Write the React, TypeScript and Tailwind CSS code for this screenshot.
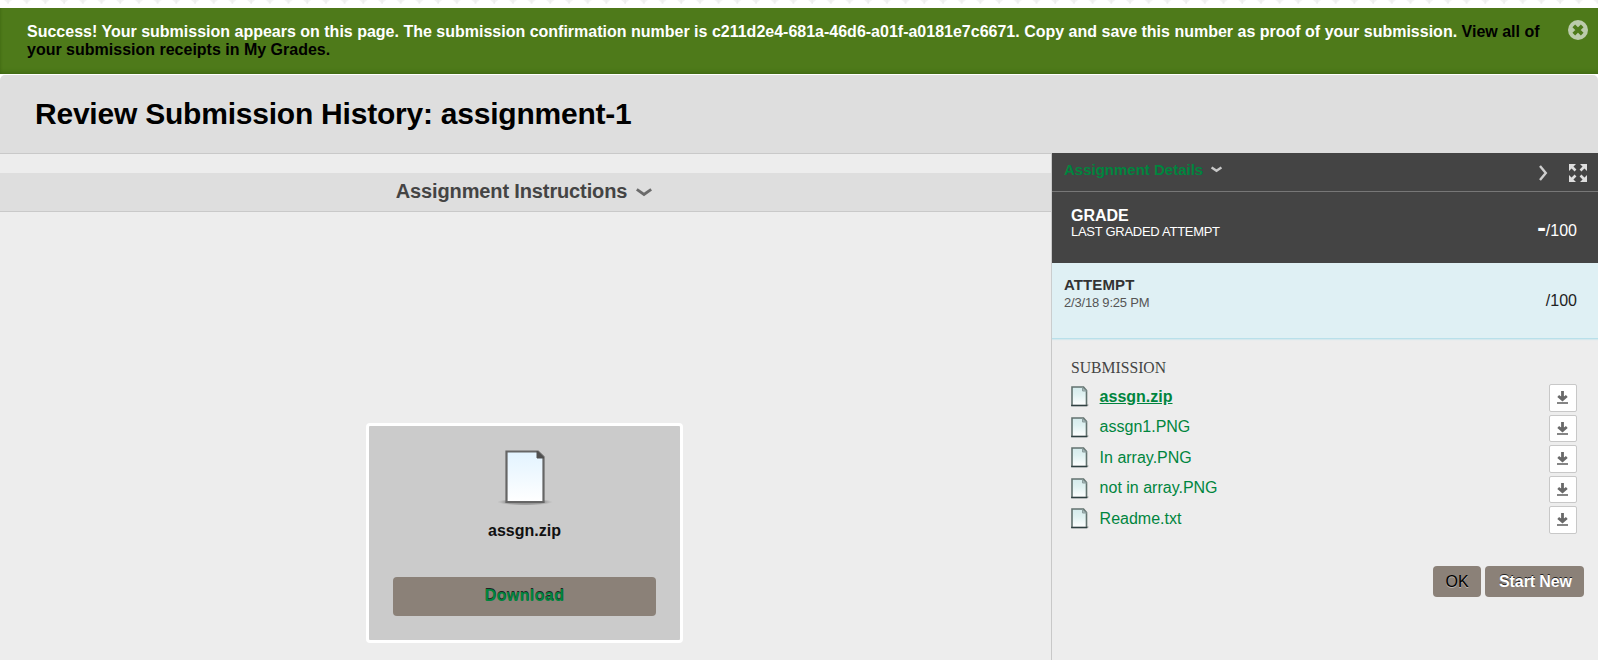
const files = ["assgn.zip", "assgn1.PNG", "In array.PNG", "not in array.PNG", "Readme.txt"];

function SmallDoc() {
  return (
    <svg width="18" height="22" viewBox="0 0 18 22" className="block">
      <defs>
        <linearGradient id="sd" x1="0" y1="0" x2="0" y2="1">
          <stop offset="0" stopColor="#d5ebec" />
          <stop offset="0.4" stopColor="#dff1f1" />
          <stop offset="1" stopColor="#ffffff" />
        </linearGradient>
      </defs>
      <path d="M0 19H17.5" stroke="#c4c4c4" strokeWidth="2" />
      <path d="M1 1H12.5L15.5 4.5V19.5H1Z" fill="url(#sd)" stroke="#62726f" strokeWidth="1.6" />
      <path d="M11.5 1.5V5H15.5Z" fill="#a5b8b8" stroke="#8a9c9c" strokeWidth="1" />
      <path d="M0.2 19.5H16.3" stroke="#2f4142" strokeWidth="1.3" />
    </svg>
  );
}

function LargeDoc() {
  return (
    <svg width="56" height="58" viewBox="0 0 56 58" className="block">
      <defs>
        <linearGradient id="ld" x1="0" y1="0" x2="0" y2="1">
          <stop offset="0" stopColor="#e2f3ff" />
          <stop offset="1" stopColor="#ffffff" />
        </linearGradient>
        <radialGradient id="sh">
          <stop offset="0" stopColor="#666" stopOpacity="0.7" />
          <stop offset="0.7" stopColor="#777" stopOpacity="0.55" />
          <stop offset="1" stopColor="#999" stopOpacity="0" />
        </radialGradient>
      </defs>
      <ellipse cx="28" cy="53" rx="28" ry="3.5" fill="url(#sh)" />
      <path d="M9.5 2.5H41L46.5 8V53H9.5Z" fill="url(#ld)" stroke="#666" strokeWidth="2.2" />
      <path d="M40 2V9H47Z" fill="#505050" stroke="#505050" />
    </svg>
  );
}

function DownloadIcon() {
  return (
    <svg width="12" height="14" viewBox="0 0 12 14">
      <path d="M5.5 0V8M1.2 5L5.5 8.6L9.8 5" fill="none" stroke="#696969" strokeWidth="2.8" />
      <path d="M3 5.5H8L5.5 9Z" fill="#696969" />
      <path d="M0 12H11" stroke="#858585" strokeWidth="2" />
    </svg>
  );
}

export default function App() {
  return (
    <div className="flex h-[660px] w-full flex-col overflow-hidden bg-[#ededed] font-['Liberation_Sans',Arial,sans-serif]">
      <svg className="block h-2 w-full shrink-0 bg-white">
        <defs>
          <pattern id="dots" x="0" y="-1" width="18.7" height="9" patternUnits="userSpaceOnUse">
            <path d="M4 1H12L8 4.5Z" fill="#f3f3f3" />
            <path d="M8 1V5" stroke="#ececec" />
          </pattern>
        </defs>
        <rect width="100%" height="8" fill="url(#dots)" />
      </svg>
      <div className="flex h-[66px] shrink-0 justify-between bg-[#4e7a1a] pt-[15px] pr-[10px] pl-[27px] shadow-[inset_0_-5px_5px_-4px_#3c6312,inset_2px_0_3px_-2px_#3c6312]">
        <p className="text-[16px] leading-[18px] font-bold whitespace-nowrap text-white">
          Success! Your submission appears on this page. The submission confirmation number is c211d2e4-681a-46d6-a01f-a0181e7c6671. Copy and save this number as proof of your submission. <span className="text-black">View all of<br />your submission receipts in My Grades.</span>
        </p>
        <svg width="20" height="20" viewBox="0 0 20 20" className="-mt-[3px]">
          <circle cx="10" cy="10" r="10" fill="#bccbac" />
          <path d="M5.8 5.8L14.2 14.2M14.2 5.8L5.8 14.2" stroke="#4e7a1a" strokeWidth="3.8" />
        </svg>
      </div>
      <div className="shrink-0 bg-white pt-px">
        <header className="h-[79px] rounded-t-[5px] border-b border-[#c9c9c9] bg-[#dedede] pt-[21px] pl-[35px]">
          <h1 className="text-[30px] leading-[36px] font-bold tracking-[-0.22px] whitespace-nowrap text-black">Review Submission History: assignment-1</h1>
        </header>
      </div>
      <div className="-mt-px flex min-h-0 flex-1">
        <main className="mt-px flex w-[1052px] shrink-0 flex-col items-center border-r border-[#c8c8c8] pt-[19px]">
          <div className="flex h-[39px] w-full items-center justify-center gap-[9px] border-b border-[#c9c9c9] bg-[#dedede] pr-[3px] pb-[2px] text-[20px] font-bold text-[#444]">
            <span className="leading-6 tracking-[-0.13px]">Assignment Instructions</span>
            <svg width="16" height="9" viewBox="0 0 16 9" className="mt-[2px]"><path d="M0.8 1.3L8 6.5L15.2 1.3" fill="none" stroke="#6b6b6b" strokeWidth="2.8" /></svg>
          </div>
          <section className="mt-[211px] mr-[2px] flex h-[220px] w-[317px] flex-col items-center rounded-[4px] border-[3px] border-white bg-[#cbcbcb] pt-[23px]">
            <LargeDoc />
            <div className="mt-[14px] text-[16px] leading-[20px] font-bold text-[#111]">assgn.zip</div>
            <button className="mt-[36px] h-[39px] w-[263px] rounded-[4px] bg-[#8b8178] pb-px text-[16px] font-bold tracking-[0.4px] text-[#00853e] [text-shadow:0_-1px_0_#222]">Download</button>
          </section>
        </main>
        <aside className="flex min-w-0 flex-1 flex-col">
          <div className="flex h-[39px] shrink-0 justify-between border-b border-[#777] bg-[#444] pr-[11px] pl-3">
            <div className="flex items-start gap-[8px] pt-[8px] text-[15px] leading-[18px] font-bold text-[#00853e]">
              Assignment Details
              <svg width="11" height="7" viewBox="0 0 11 7" className="mt-[5px]"><path d="M0.6 1.4L5.5 4.8L10.4 1.4" fill="none" stroke="#c8c8c8" strokeWidth="2.3" /></svg>
            </div>
            <div className="flex items-start pt-[11px]">
              <svg width="9" height="16" viewBox="0 0 9 16" className="mt-px mr-[21px]"><path d="M1 1L6.8 8L1 15" fill="none" stroke="#cfcfcf" strokeWidth="2.4" /></svg>
              <svg width="18" height="18" viewBox="0 0 18 18" fill="#dedede" stroke="#dedede" strokeWidth="2.6">
                <path d="M0 0H7L0 7ZM18 0H11L18 7ZM0 18H7L0 11ZM18 18H11L18 11Z" stroke="none" />
                <path d="M2 2L6.5 6.5M16 2L11.5 6.5M2 16L6.5 11.5M16 16L11.5 11.5" />
              </svg>
            </div>
          </div>
          <div className="flex h-[71px] shrink-0 justify-between bg-[#444] pr-[21px] pl-[19px] text-white">
            <div className="pt-[14px]">
              <h2 className="text-[16px] leading-[19px] font-bold">GRADE</h2>
              <p className="text-[13px] leading-[14px] tracking-[-0.28px]">LAST GRADED ATTEMPT</p>
            </div>
            <div className="flex items-start pt-[30px] text-[16px] leading-[18px]"><span className="-mt-[4px] text-[26px] leading-[18px] font-bold">-</span>/100</div>
          </div>
          <div className="flex h-[76px] shrink-0 justify-between border-b border-[#b9e0ea] bg-[#dff0f4] pr-[21px] pl-[12px] text-[#222] shadow-[0_1px_1px_#d5e8ed]">
            <div className="pt-[13px]">
              <h2 className="text-[15px] leading-[18px] font-bold tracking-[0.1px] text-[#333]">ATTEMPT</h2>
              <p className="text-[13px] leading-[17px] tracking-[-0.2px] text-[#555]">2/3/18 9:25 PM</p>
            </div>
            <div className="pt-[29px] text-[16px] leading-[18px]">/100</div>
          </div>
          <div className="pt-[20px] pr-[21px] pl-[19px]">
            <h3 className="font-['Liberation_Serif',serif] text-[15.7px] leading-[18px] text-[#444]">SUBMISSION</h3>
            <ul className="mt-[7px]">
              {files.map((f, i) => (
                <li key={f} className="flex h-[30.5px] items-start">
                  <span className="pt-[2.4px]"><SmallDoc /></span>
                  <a className={i === 0 ? "ml-[10.6px] flex-1 pt-[3.6px] text-[16px] leading-[18px] font-bold text-[#00853e] underline" : "ml-[10.6px] flex-1 pt-[3.6px] text-[16px] leading-[18px] text-[#00853e]"}>{f}</a>
                  <button className="flex h-[27.5px] w-7 justify-center rounded-[2px] border border-[#c8c8c8] bg-white pt-[6px]"><DownloadIcon /></button>
                </li>
              ))}
            </ul>
          </div>
          <div className="mt-[29px] flex justify-end gap-1 pr-[14px]">
            <button className="h-[31px] w-12 rounded-[4px] bg-[#8b8178] pt-px text-[16px] text-black [text-shadow:0_1px_0_#b9b5b0]">OK</button>
            <button className="h-[31px] w-[99px] rounded-[4px] bg-[#8b8178] pt-px pl-[2px] text-[16px] font-bold tracking-[-0.1px] text-white [text-shadow:0_-1px_0_#222]">Start New</button>
          </div>
        </aside>
      </div>
    </div>
  );
}
